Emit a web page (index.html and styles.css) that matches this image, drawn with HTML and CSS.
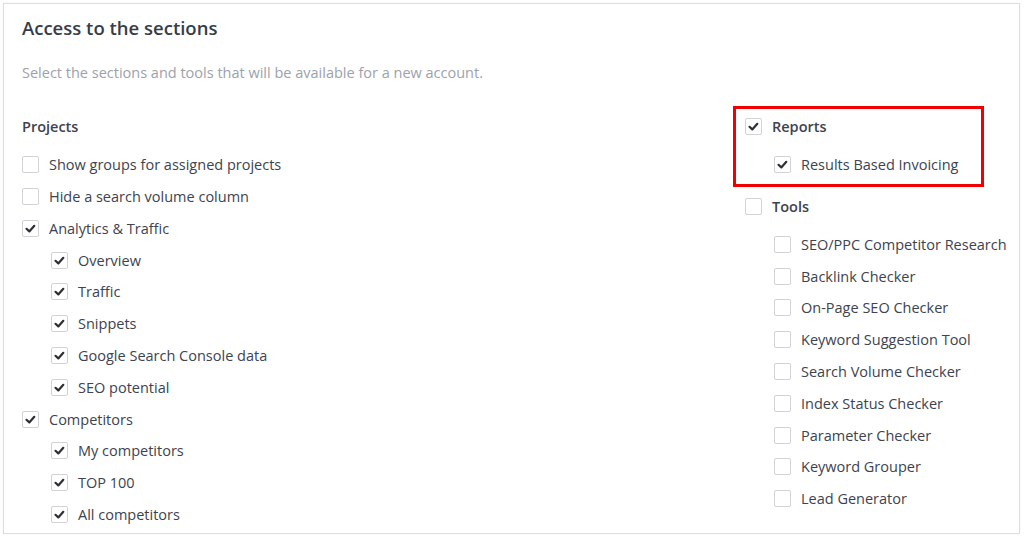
FILE: index.html
```html
<!DOCTYPE html>
<html>
<head>
  <meta charset="UTF-8">
  <meta name="viewport" content="width=device-width, initial-scale=1">
  <title>Access to the sections</title>
  <link rel="stylesheet" href="styles.css">
</head>
<body>
  <div class="card">
    <h2 class="title">Access to the sections</h2>
    <p class="hint">Select the sections and tools that will be available for a new account.</p>

    <div class="columns">
      <!-- left column -->
      <div class="col">
        <div class="row heading">Projects</div>
        <div class="list">
          <label class="row"><span class="box"></span>Show groups for assigned projects</label>
          <label class="row"><span class="box"></span>Hide a search volume column</label>
          <label class="row"><span class="box checked"></span>Analytics &amp; Traffic</label>
          <div class="sub">
            <label class="row"><span class="box checked"></span>Overview</label>
            <label class="row"><span class="box checked"></span>Traffic</label>
            <label class="row"><span class="box checked"></span>Snippets</label>
            <label class="row"><span class="box checked"></span>Google Search Console data</label>
            <label class="row"><span class="box checked"></span>SEO potential</label>
          </div>
          <label class="row"><span class="box checked"></span>Competitors</label>
          <div class="sub">
            <label class="row"><span class="box checked"></span>My competitors</label>
            <label class="row"><span class="box checked"></span>TOP 100</label>
            <label class="row"><span class="box checked"></span>All competitors</label>
          </div>
        </div>
      </div>

      <!-- right column -->
      <div class="col">
        <div class="group marked">
          <label class="row heading"><span class="box checked"></span>Reports</label>
          <div class="sub">
            <label class="row"><span class="box checked"></span>Results Based Invoicing</label>
          </div>
        </div>
        <div class="group">
          <label class="row heading"><span class="box"></span>Tools</label>
          <div class="sub">
            <label class="row"><span class="box"></span>SEO/PPC Competitor Research</label>
            <label class="row"><span class="box"></span>Backlink Checker</label>
            <label class="row"><span class="box"></span>On-Page SEO Checker</label>
            <label class="row"><span class="box"></span>Keyword Suggestion Tool</label>
            <label class="row"><span class="box"></span>Search Volume Checker</label>
            <label class="row"><span class="box"></span>Index Status Checker</label>
            <label class="row"><span class="box"></span>Parameter Checker</label>
            <label class="row"><span class="box"></span>Keyword Grouper</label>
            <label class="row"><span class="box"></span>Lead Generator</label>
          </div>
        </div>
      </div>
    </div>
  </div>

  <script>
    // put a tick into every checked box
    var tick = '<svg width="17" height="17" viewBox="0 0 17 17"><polyline points="4.5,8.8 7.3,11.4 12.3,5.8" fill="none" stroke="#2d2f33" stroke-width="2.2" stroke-linecap="round" stroke-linejoin="round"/></svg>';
    document.querySelectorAll('.box.checked').forEach(function (box) {
      box.innerHTML = tick;
    });
  </script>
</body>
</html>
```

FILE: styles.css
```css
body {
  margin: 0;
  padding: 0;
  background-color: #fff;
  font-family: "Open Sans", Arial, sans-serif;
  color: #3d4350;
}

.card {
  margin: 3px;
  width: 1017px;
  height: 531px;
  box-sizing: border-box;
  border: 1px solid #dedede;
  box-shadow: 0 0 2px rgba(0, 0, 0, 0.06);
  padding: 10px 18px 0 18px;
  overflow: hidden;
}

.title {
  margin: 0;
  font-size: 18.5px;
  font-weight: 600;
  line-height: 28px;
  color: #363c48;
}

.hint {
  margin: 20px 0 0 0;
  font-size: 14.5px;
  line-height: 22px;
  color: #9da2aa;
}

.columns {
  display: grid;
  grid-template-columns: 723px 1fr;
  margin-top: 27px;
}

.row {
  display: flex;
  align-items: center;
  height: 31.8px;
  font-size: 14.5px;
  white-space: nowrap;
}

.heading {
  font-weight: 600;
  margin-bottom: 6px;
}

.sub {
  padding-left: 29px;
}

.group {
  position: relative;
  margin-bottom: 10px;
}

.marked::after {
  content: "";
  position: absolute;
  top: -5px;
  left: -12px;
  width: 251px;
  bottom: -6px;
  box-sizing: border-box;
  border: 3px solid #f20000;
}

.box {
  flex: none;
  width: 17px;
  height: 17px;
  box-sizing: border-box;
  border: 1px solid #d0d3d7;
  border-radius: 2px;
  margin-right: 10px;
  background-color: #fff;
  position: relative;
}

.box svg {
  position: absolute;
  top: -1px;
  left: -1px;
}
```
